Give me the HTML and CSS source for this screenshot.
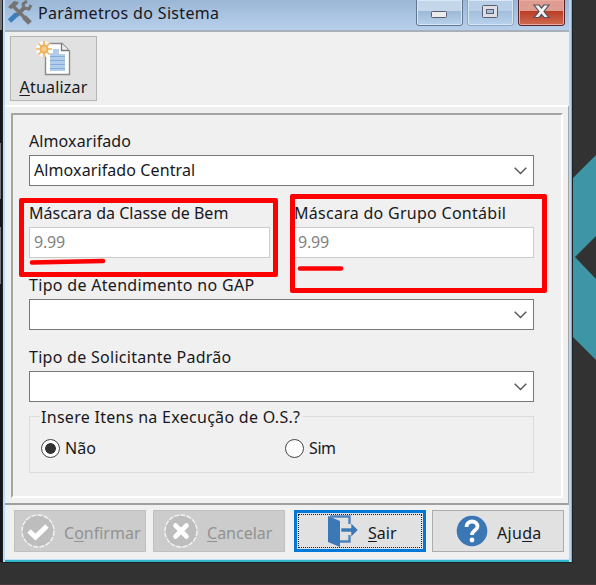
FILE: index.html
```html
<!DOCTYPE html>
<html lang="pt-BR">
<head>
<meta charset="utf-8">
<title>Parâmetros do Sistema</title>
<link rel="stylesheet" href="styles.css">
</head>
<body>
<svg class="backdrop" viewBox="0 0 596 585"><rect width="3" height="562" fill="#17161a"/><path d="M0 0h2v30H0zM0 143h1v56H0zM0 227h1v57H0z" fill="#77777b"/><path d="M573 178L596 155V236L575 257L596 279V360L573 337Z" fill="#3e95a5"/><path d="M0 584.500H596" stroke="#45373b"/></svg>
<main class="window">
  <header class="titlebar">
    <svg class="tools" width="26" height="26" viewBox="0 0 26 26"><path d="M6 6L20 20" stroke="#747474" stroke-width="3.400"/><path d="M17 17L23 23" stroke="#747474" stroke-width="5"/><path d="M1 7L4 9L10 5L12 2L7 1Z" fill="#747474"/><path d="M10 15L18 7" stroke="#747474" stroke-width="4"/><path d="M20 1L16 4L17 8L22 9L24 5" fill="none" stroke="#747474" stroke-width="3"/><path d="M2.500 21L10 14" stroke="#3d7fbd" stroke-width="5"/></svg>
    <h1>Parâmetros do Sistema</h1>
    <div class="controls">
      <button aria-label="Minimizar"><svg width="46" height="25"><rect x="14.500" y="11.500" width="15" height="6" rx="1" fill="#ececec" stroke="#585d71"/></svg></button>
      <button class="max" aria-label="Maximizar"><svg width="46" height="25"><rect x="14.500" y="5.500" width="15" height="12" rx="1" fill="#dedfe4" stroke="#585d71"/><rect x="18.500" y="9.500" width="7" height="4" fill="#a6bfdc" stroke="#585d71"/></svg></button>
      <button class="close" aria-label="Fechar"><svg width="46" height="25"><path d="M15 5h5l2.500 3L25 5h5l-5 6.500 5 6h-5l-2.500-3-2.500 3h-5l5-6z" fill="#f2f2f2" stroke="#58525f" stroke-width="1.200"/></svg></button>
    </div>
  </header>
  <nav class="toolbar">
    <button class="refresh"><svg width="36" height="36" viewBox="0 0 36 36"><path d="M10.500 2.500H27L34.500 10V33.500H10.500Z" fill="#fff" stroke="#8b8b8b" stroke-width="1.400"/><path d="M26.500 2.500V9.500H34" fill="#eee" stroke="#777" stroke-width="1.300"/><path d="M18 8h6v5h6v17H15V12h3z" fill="#b2cceb"/><path d="M15 15.500h15m-15 4h15m-15 4h15m-15 4h15" stroke="#85acd6"/><circle cx="9" cy="8" r="8" fill="#fff" opacity=".8"/><path d="M9 0v16M1 8h16M3.500 2.500l11 11m0-11l-11 11" stroke="#eeb461" stroke-width="1.700"/><circle cx="9" cy="8" r="3.500" fill="#f8cf90" stroke="#efb057" stroke-width="2"/></svg><span class="t-refresh"><u>A</u>tualizar</span></button>
  </nav>
  <section class="body">
    <form class="panel">
      <div class="field"><label class="t-alm">Almoxarifado</label><div class="select"><span class="t-central">Almoxarifado Central</span><svg width="13" height="8"><path d="M.7.7L6.500 6.500L12.300.7" /></svg></div></div>
      <div class="pair">
        <div class="field mark mark-a"><label class="t-bem">Máscara da Classe de Bem</label><div class="input"><span class="t-num">9.99</span></div><svg class="stroke" width="78" height="8"><path d="M3 4.500L74 3" stroke="#f00" stroke-width="4.600" stroke-linecap="round"/></svg></div>
        <div class="field mark mark-b"><label class="t-grupo">Máscara do Grupo Contábil</label><div class="input"><span class="t-num">9.99</span></div><svg class="stroke" width="50" height="8"><path d="M3 3.500H44" stroke="#f00" stroke-width="4.600" stroke-linecap="round"/></svg></div>
      </div>
      <div class="field"><label class="t-gap">Tipo de Atendimento no GAP</label><div class="select"><svg width="13" height="8"><path d="M.7.7L6.500 6.500L12.300.7"/></svg></div></div>
      <div class="field"><label class="t-sol">Tipo de Solicitante Padrão</label><div class="select"><svg width="13" height="8"><path d="M.7.7L6.500 6.500L12.300.7"/></svg></div></div>
      <fieldset><legend><span class="t-legend">Insere Itens na Execução de O.S.?</span></legend><div class="radios"><label><i class="radio on"></i><span class="t-nao">Não</span></label><label><i class="radio"></i><span class="t-sim">Sim</span></label></div></fieldset>
    </form>
  </section>
  <footer>
    <button class="action off"><svg width="34" height="34" viewBox="0 0 34 34"><circle cx="17" cy="17" r="16" fill="#bdbdbd" stroke="#f4f4f4" stroke-width="1.400" stroke-dasharray="5 1.200"/><path d="M8 17L14.500 23L26 12" fill="none" stroke="#fff" stroke-width="5"/></svg><span class="t-conf">C<u>o</u>nfirmar</span></button>
    <button class="action off cancel"><svg width="34" height="34" viewBox="0 0 34 34"><circle cx="17" cy="17" r="16" fill="#bdbdbd" stroke="#f4f4f4" stroke-width="1.400" stroke-dasharray="5 1.200"/><path d="M11.500 11.500L22.500 22.500M22.500 11.500L11.500 22.500" stroke="#fff" stroke-width="4.600" stroke-linecap="round"/></svg><span class="t-canc"><u>C</u>ancelar</span></button>
    <button class="action exit"><svg width="32" height="34" viewBox="0 0 32 34"><path d="M1 2L13 7V33L1 28Z" fill="#3c78b8"/><path d="M3 2.500H22.500V10M22.500 21V27.500H13" fill="none" stroke="#4d83bd" stroke-width="2.400"/><path d="M14 14h10V9l7 7-7 7v-5H14z" fill="#3c78b8" stroke="#e1e1e1" stroke-width=".6"/></svg><span class="t-sair"><u>S</u>air</span></button>
    <button class="action help"><svg width="32" height="32" viewBox="0 0 32 32"><circle cx="16" cy="16" r="15.300" fill="#3b76b5"/><path d="M10.500 12C10.500 4.500 21.500 5 21.500 11.500C21.500 15.500 16 15 16 20" fill="none" stroke="#fff" stroke-width="3.800"/><circle cx="16" cy="25" r="2.400" fill="#fff"/></svg><span class="t-ajuda">Aju<u>d</u>a</span></button>
  </footer>
</main>
</body>
</html>
```
FILE: styles.css
```css
*, *::after { box-sizing: border-box; }
body { margin: 0; width: 596px; height: 585px; overflow: hidden; background: #323232; font: 16px/20px "Noto Sans", "Open Sans", sans-serif; color: #181820; }
button { font: inherit; color: inherit; padding: 0; }
svg { flex: none; }
span, h1, .field > label { white-space: nowrap; }
u { text-decoration-thickness: 1px; text-underline-offset: 2px; }
.backdrop { position: absolute; inset: 0; z-index: -1; }
.window { width: 571px; height: 563px; margin-left: 2px; border: solid #1b2327; border-width: 0 1px 1px; background: #f0f0f0; box-shadow: inset 2px 0 #c0dbfa, inset -1px 0 #53c5e3, inset -3px 0 #b9d6ee, inset 0 -2px #32b6ca, inset 0 -3px #c3e1f4; padding: 0 3px 3px 2px; display: flex; flex-direction: column; }
.titlebar { height: 32px; flex: none; border-bottom: 2px solid #aab0b8; background: linear-gradient(#9bb7d6, #b7cfeb); display: flex; }
.tools { margin-left: 2px; }
h1 { margin: 3px 0 0 5px; font-size: 16px; font-weight: 400; line-height: 20px; letter-spacing: .33px; width: 186px; }
.controls { margin: -1px 4px 0 auto; display: flex; gap: 4px; }
.controls button { width: 47px; height: 27px; border: 1px solid #62768f; border-radius: 0 0 3px 3px; background: linear-gradient(#c4d6ea 45%, #9db9d6 46%, #b8d1eb); box-shadow: inset 0 0 0 1px #d8e7f6; }
.controls svg { display: block; }
.controls .max { border-color: #8ba5c3; background: linear-gradient(#b9cfe8 45%, #a3bfdd 46%, #b8d2ec); }
.controls .close { border-color: #5b2330; background: linear-gradient(#df9d92 43%, #b93d25 44%, #ce6b50); box-shadow: inset 0 0 0 1px #e9aa9e; }
.toolbar { height: 73px; padding: 4px 0 0 5px; }
.refresh { width: 87px; height: 65px; border: 1px solid #b5b5b5; background: #e1e1e1; display: flex; flex-direction: column; align-items: center; padding-top: 4px; }
.refresh svg { margin-left: -2px; }
.refresh span { letter-spacing: .2px; }
.body { height: 400px; flex: none; border-top: 2px solid #fff; border-right: 1px solid #a5a5a5; border-bottom: 2px solid #a0a0a0; padding: 6px 6px 6px; }
.panel { width: 552px; height: 385px; border: 2px solid; border-color: #a5a5a5 #fff #fff #a5a5a5; padding: 16px 0 0 16px; }
.field { width: 505px; height: 72px; }
.field > label { display: block; height: 24px; line-height: 20px; }
.select, .input { height: 31px; border: 1px solid #777; background: #fff; padding: 0 6px 2px 4px; display: flex; align-items: center; }
.select svg { margin: 2px 0 0 auto; fill: none; stroke: #555; stroke-width: 1.400; }
.pair { display: flex; gap: 23px; }
.pair .field { width: 241px; position: relative; }
.input { border-color: #ccc; color: #828282; }
.t-num { letter-spacing: -.2px; }
.t-alm, .t-central { letter-spacing: .1px; }
.t-grupo { padding-left: 1px; letter-spacing: .28px; }
.t-gap { letter-spacing: .31px; }
.t-sol { letter-spacing: .28px; }
.t-legend { letter-spacing: .29px; }
.t-sim { letter-spacing: -.4px; }
.t-ajuda { letter-spacing: .3px; }
.mark::after { content: ""; position: absolute; border: 5px solid #f00; border-radius: 2px; }
.mark-a::after { left: -10px; top: -5px; width: 259px; height: 79px; }
.mark-b::after { left: -3px; top: -9px; width: 257px; height: 99px; }
.stroke { position: absolute; left: 0; top: 55px; z-index: 2; }
.mark-b .stroke { left: 4px; top: 62px; }
fieldset { width: 505px; height: 66px; margin: -12px 0 0; padding: 0 0 0 10px; border: 1px solid #dcdcdc; position: relative; }
legend { height: 18px; padding: 0 3px 0 1px; line-height: 20px; }
.radios { display: flex; margin-top: 13px; padding-left: 1px; }
.radios label { width: 244px; display: flex; align-items: center; gap: 5px; }
.radio { width: 19px; height: 19px; border: 1.500px solid #444; border-radius: 50%; background: #fff; }
.on { background: radial-gradient(circle, #333 5px, #fff 5.700px); }
footer { padding: 5px 0 0 9px; display: flex; }
.action { width: 132px; height: 42px; border: 1px solid #adadad; background: #e1e1e1; display: flex; align-items: center; padding: 0 0 0 6px; margin-right: 8px; }
.action span { margin: 3px 0 0 9px; }
.off { background: #ccc; border-color: #c0c0c0; color: #929292; }
.cancel { padding-left: 10px; margin-right: 9px; margin-left: -1px; }
.exit { border: 3px solid #0078d7; outline: 1px dotted #222; outline-offset: -5px; padding-left: 30px; margin-right: 6px; }
.help { padding-left: 23px; margin-right: 0; }
```
